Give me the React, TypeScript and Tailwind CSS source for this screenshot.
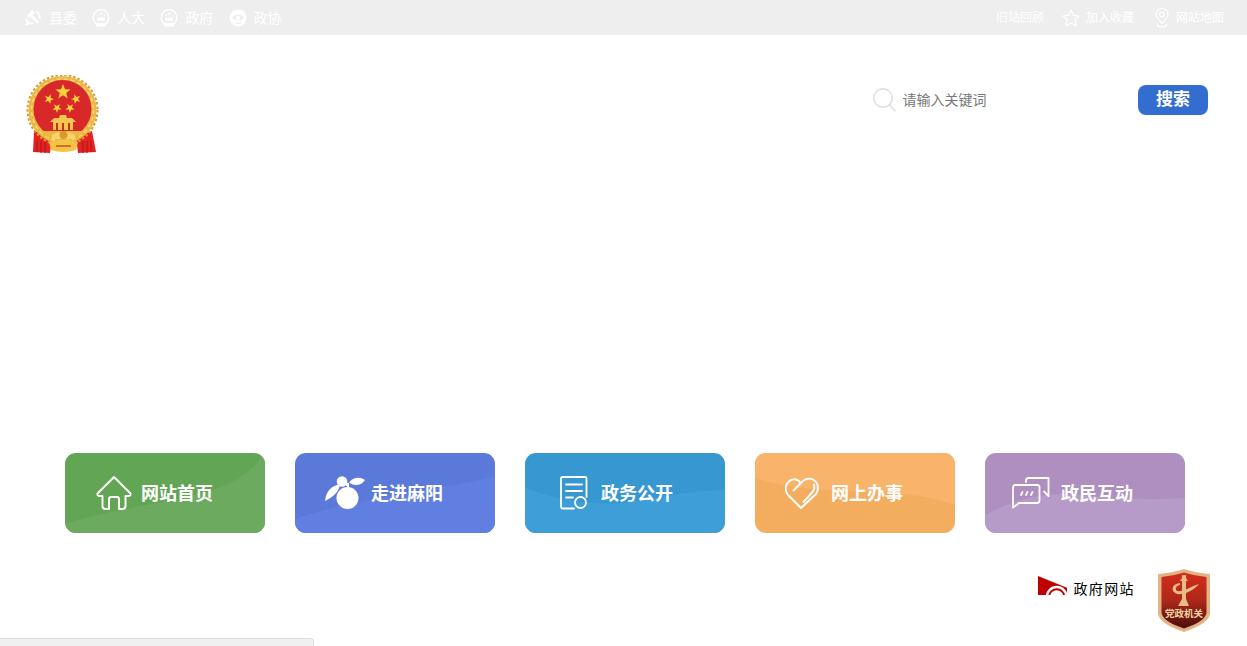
import React from "react";

const FONT = "font-['Liberation_Sans','Noto_Sans_CJK_SC',sans-serif]";

const Star = ({ cx, cy, r, fill = "#f7d23c", rot = 0 }: { cx: number; cy: number; r: number; fill?: string; rot?: number }) => {
  const pts: string[] = [];
  for (let i = 0; i < 10; i++) {
    const a = ((-90 + rot + i * 36) * Math.PI) / 180;
    const rr = i % 2 === 0 ? r : r * 0.42;
    pts.push(`${(cx + rr * Math.cos(a)).toFixed(2)},${(cy + rr * Math.sin(a)).toFixed(2)}`);
  }
  return <polygon points={pts.join(" ")} fill={fill} />;
};

const PartyIcon = () => (
  <svg width="18" height="18" viewBox="0 0 18 18" fill="#fff">
    <path d="M8 1 L11 3.5 L8.5 6 L15 13 L13.5 15 L6.5 7.5 L5 9 L3 6.5 Z" />
    <path d="M11.5 1.5 C15.5 3 17.5 7 16.5 11 L14.5 9 C15 6.5 14 4 11.5 2.5 Z" />
    <path d="M2.5 8.5 C2.5 12 6 14 9 13.5 L10.5 15 L8.5 15.5 L5.5 15 L2.5 17 L1 15.5 L3 14 C1.5 12.5 1 10.5 1.5 9 Z" />
  </svg>
);

const EmblemIcon = () => (
  <svg width="18" height="18" viewBox="0 0 18 18">
    <circle cx="9" cy="8.5" r="7.8" fill="none" stroke="#fff" strokeWidth="1.3" />
    <Star cx={9} cy={4.6} r={1.8} fill="#fff" />
    <Star cx={5.6} cy={6.6} r={1} fill="#fff" />
    <Star cx={12.4} cy={6.6} r={1} fill="#fff" />
    <rect x="5" y="8.6" width="8" height="3" fill="#fff" />
    <path d="M3 14 H15 L13.5 17.5 H4.5 Z" fill="#fff" />
  </svg>
);

const CppccIcon = () => (
  <svg width="18" height="18" viewBox="0 0 18 18">
    <circle cx="9" cy="9" r="8.5" fill="#fff" />
    <ellipse cx="9" cy="8.5" rx="5.5" ry="3" fill="#eee" />
    <circle cx="9" cy="9" r="2.2" fill="#fff" />
    <path d="M3 13 Q9 17 15 13 Q9 14.5 3 13 Z" fill="#eee" />
  </svg>
);

const TopLink = ({ icon, label }: { icon: React.ReactNode; label: string }) => (
  <div className="flex items-center">
    {icon}
    <span className="ml-[7px] text-[14px] text-white leading-none">{label}</span>
  </div>
);

const NationalEmblem = () => (
  <svg width="74" height="79" viewBox="0 0 74 79">
    {/* ribbons go behind the wreath */}
    <path d="M8 56 L7 77 L24 78 L26 62 Z" fill="#e32322" />
    <path d="M66 56 L70 77 L52 78 L50 62 Z" fill="#e32322" />
    <path d="M11 66 V77 M15 66 V78 M19 66 V78 M57 66 V78 M61 66 V78 M65 66 V77" stroke="#a91717" strokeWidth="1" />
    <circle cx="36.5" cy="35" r="34" fill="#ecb642" />
    <circle cx="36.5" cy="35" r="35" fill="none" stroke="#dc9a2c" strokeWidth="2" strokeDasharray="2.5 2" />
    <circle cx="36.5" cy="35" r="31" fill="none" stroke="#f8dd86" strokeWidth="1.5" strokeDasharray="4 3" />
    <circle cx="36.5" cy="34" r="29" fill="#d8282a" />
    <Star cx={37} cy={17} r={8} />
    <Star cx={23} cy={24} r={5} rot={20} />
    <Star cx={50} cy={24} r={5} rot={-20} />
    <Star cx={31} cy={33} r={4.8} rot={35} />
    <Star cx={44} cy={33} r={4.8} rot={-35} />
    <path d="M34 40 H40 L41 43 H46 L50 47 H47 V55 H27 V47 H24 L28 43 H33 Z" fill="#f4c84c" />
    <rect x="30" y="48" width="2" height="7" fill="#c93021" />
    <rect x="36" y="48" width="2" height="7" fill="#c93021" />
    <rect x="42" y="48" width="2" height="7" fill="#c93021" />
    <path d="M14 56 H59 L52 62 H21 Z" fill="#efb93f" />
    <path d="M26 60 Q37 53 49 60 V64 H26 Z" fill="#f6d568" />
    <circle cx="37.5" cy="60" r="4" fill="#d89a2c" />
    <path d="M23 67 Q37 63 52 67 L50 75 Q37 79 25 75 Z" fill="#f2c345" />
    <path d="M30 71 H45" stroke="#c9541c" strokeWidth="1.5" />
  </svg>
);

const Wave = ({ d, fill }: { d: string; fill: string }) => (
  <svg className="absolute inset-0" width="200" height="80" viewBox="0 0 200 80">
    <path d={d} fill={fill} />
  </svg>
);

const HomeIcon = () => (
  <svg width="36" height="34" viewBox="0 0 36 34" fill="none" stroke="#fff" strokeWidth="1.9" strokeLinejoin="round" strokeLinecap="round">
    <path d="M18 1 L34.5 17.5 Q35 19.5 33 20 H29.5 V30 Q29.5 33 26.5 33 H23 V23 Q23 21 21 21 H15 Q13 21 13 23 V33 H9.5 Q6.5 33 6.5 30 V20 H3 Q1 19.5 1.5 17.5 Z" />
  </svg>
);

const FruitIcon = () => (
  <svg width="42" height="34" viewBox="0 0 42 34" fill="#fff">
    <circle cx="23.5" cy="22" r="11" />
    <circle cx="18" cy="5.5" r="5.3" />
    <path d="M25 6.5 C29 1 36 0.5 41 4 C38 9 31 11 25 6.5 Z" />
    <path d="M1 25 C2 15 8 9 16 8.5 C15 16 9 21 1 25 Z" />
    <path d="M20 8 Q22 6 25 7 L25 12 Z" />
  </svg>
);

const DocIcon = () => (
  <svg width="28" height="34" viewBox="0 0 28 34" fill="none" stroke="#fff" strokeWidth="1.8" strokeLinecap="round">
    <path d="M14 32.5 H3 Q1 32.5 1 30.5 V2.5 Q1 1 2.5 1 H25 Q26.5 1 26.5 2.5 V21" />
    <path d="M6 8.5 H22 M6 15 H22 M6 21.5 H13" />
    <circle cx="20.5" cy="26.5" r="5.5" />
  </svg>
);

const HeartIcon = () => (
  <svg width="36" height="34" viewBox="0 0 36 34" fill="none" stroke="#fff" strokeWidth="1.9" strokeLinecap="round" strokeLinejoin="round">
    <path d="M16 32 L3 19 C-0.5 15 0 8 5 4.5 C9 2 13 3.5 16 7 L8.5 14.5" />
    <path d="M16 7 C19 3 24 1.5 28 3.5 C33 6 34.5 13 31 18 L16 32" />
    <path d="M18.5 26 L27.5 16 Q30 13 29 8.5" />
  </svg>
);

const ChatIcon = () => (
  <svg width="38" height="32" viewBox="0 0 38 32" fill="none" stroke="#fff" strokeWidth="1.8" strokeLinecap="round" strokeLinejoin="round">
    <path d="M14 5 V3.5 Q14 1 16.5 1 H36.5 V19 L32 14.5" />
    <path d="M26 8 H3.5 Q1 8 1 10.5 V30.5 L7 26 H25 Q27.5 26 27.5 23.5 V9.5 Z" />
    <path d="M9 18 L10.5 15 M14 18 L15.5 15 M19 18 L20.5 15" strokeWidth="1.8" />
  </svg>
);

const navCards = [
  { label: "网站首页", icon: <HomeIcon />, bg: "bg-[#62a555]", wave: "M0 71 C60 52 130 48 165 30 C180 22 192 12 200 0 V80 H0 Z", fill: "#6caa60", iconBox: "ml-[31px] w-[36px]", gap: "ml-[9px]" },
  { label: "走进麻阳", icon: <FruitIcon />, bg: "bg-[#5b79d9]", wave: "M0 66 C50 48 130 38 200 24 V80 H0 Z", fill: "#617fe0", iconBox: "ml-[29px] w-[42px]", gap: "ml-[5px]" },
  { label: "政务公开", icon: <DocIcon />, bg: "bg-[#3797d0]", wave: "M0 35 C30 46 60 52 95 50 C130 46 165 37 200 37 V80 H0 Z", fill: "#3e9fd8", iconBox: "ml-[35px] w-[28px]", gap: "ml-[13px]" },
  { label: "网上办事", icon: <HeartIcon />, bg: "bg-[#f3ad5f]", wave: "M0 25 C50 42 120 36 165 43 C180 46 192 49 200 52 V0 H0 Z", fill: "#f8b46b", iconBox: "ml-[30px] w-[36px]", gap: "ml-[10px]" },
  { label: "政民互动", icon: <ChatIcon />, bg: "bg-[#ae8fc0]", wave: "M0 62 C30 46 60 38 100 42 C135 46 170 47 200 45 V80 H0 Z", fill: "#b69bc9", iconBox: "ml-[27px] w-[38px]", gap: "ml-[11px]" },
];

const GovSiteLogo = () => (
  <svg width="30" height="19" viewBox="0 0 30 19">
    <path d="M0 0 L29 11.7 V19 H0 Z" fill="#c00000" />
    <circle cx="18.7" cy="20.7" r="11" fill="#fff" />
    <circle cx="18.7" cy="20.7" r="8.5" fill="#c00000" />
    <circle cx="18.7" cy="20.7" r="6.5" fill="#fff" />
  </svg>
);

const PartyBadge = () => (
  <svg width="52" height="63" viewBox="0 0 52 63">
    <defs>
      <linearGradient id="shield" x1="0" y1="0" x2="0" y2="1">
        <stop offset="0%" stopColor="#d52c1a" />
        <stop offset="50%" stopColor="#ad281a" />
        <stop offset="75%" stopColor="#7c1a11" />
        <stop offset="100%" stopColor="#4a0f0a" />
      </linearGradient>
    </defs>
    <path d="M0 5 Q14 4 26 0 Q38 4 52 5 V44 Q52 54 26 63 Q0 54 0 44 Z" fill="#e2b384" />
    <path d="M3.5 8 Q15 7 26 3.5 Q37 7 48.5 8 V43 Q48.5 52 26 59.5 Q3.5 52 3.5 43 Z" fill="url(#shield)" />
    <path d="M24 6 H28 V9 L30 12 H28 V30 L31 37 H20 L24 30 V12 H22 L24 9 Z" fill="#e9bb85" />
    <path d="M15 22 Q13 15 22 14 L22 16 Q17 17 18 21 Q20 24 29 20 Q37 16 41 15 Q36 21 28 24 Q18 27 15 22 Z" fill="#e9bb85" />
    <text x="26" y="47.5" textAnchor="middle" fontSize="9.5" fontWeight="700" fill="#f3d6a8" fontFamily="'Noto Sans CJK SC',sans-serif">党政机关</text>
  </svg>
);

export default function App() {
  return (
    <div className={`relative h-[646px] w-full overflow-hidden bg-white ${FONT}`}>
      <div className="flex h-[35px] items-center justify-between bg-[#eeeeee] pl-[24px] pr-[23px]">
        <div className="flex items-center gap-[15.2px]">
          <TopLink icon={<PartyIcon />} label="县委" />
          <TopLink icon={<EmblemIcon />} label="人大" />
          <TopLink icon={<EmblemIcon />} label="政府" />
          <TopLink icon={<CppccIcon />} label="政协" />
        </div>
        <div className="flex items-center text-[12px] text-white">
          <span>旧站回顾</span>
          <svg className="ml-[18px]" width="18" height="18" viewBox="0 0 18 18" fill="none" stroke="#fff" strokeWidth="1.2" strokeLinejoin="round">
            <path d="M9 1 L11.4 6.3 L17 7 L12.9 11 L14 16.8 L9 14 L4 16.8 L5.1 11 L1 7 L6.6 6.3 Z" />
          </svg>
          <span className="ml-[6px]">加入收藏</span>
          <svg className="ml-[21px]" width="14" height="20" viewBox="0 0 14 20" fill="none" stroke="#fff" strokeWidth="1.2">
            <path d="M7 15.5 C3.5 11.5 1 9 1 6.5 A6 6 0 0 1 13 6.5 C13 9 10.5 11.5 7 15.5 Z" />
            <circle cx="7" cy="6.5" r="2.4" />
            <path d="M3 15.5 Q1 18.8 7 19 Q13 18.8 11 15.5" />
          </svg>
          <span className="ml-[7px]">网站地图</span>
        </div>
      </div>

      <div className="flex h-[418px] items-start justify-between pl-[26px] pr-[39px] pt-[40px]">
        <NationalEmblem />
        <div className="mt-[10px] flex w-[335px] items-center">
          <svg width="23" height="24" viewBox="0 0 23 24" fill="none" stroke="#dddddd" strokeWidth="1.4" strokeLinecap="round">
            <circle cx="10" cy="10" r="9.3" />
            <path d="M16.8 17 L22 23" />
          </svg>
          <span className="ml-[6.5px] text-[14px] text-[#777777]">请输入关键词</span>
          <button className="ml-auto h-[30px] w-[70px] rounded-[8px] bg-[#346dd0] text-[17px] font-bold text-white">搜索</button>
        </div>
      </div>

      <div className="flex gap-[30px] pl-[65px]">
        {navCards.map((card) => (
          <div key={card.label} className={`relative flex h-[80px] w-[200px] items-center overflow-hidden rounded-[11px] ${card.bg}`}>
            <Wave d={card.wave} fill={card.fill} />
            <div className={`relative flex shrink-0 justify-center ${card.iconBox}`}>{card.icon}</div>
            <span className={`relative mt-[3px] text-[18px] font-bold text-white ${card.gap}`}>{card.label}</span>
          </div>
        ))}
      </div>

      <div className="mt-[36px] flex items-start justify-end pr-[37px]">
        <div className="mt-[7px] flex items-start">
          <GovSiteLogo />
          <span className="ml-[5.5px] mt-[3.5px] text-[14px] leading-[19px] tracking-[1.4px] text-black">政府网站</span>
        </div>
        <div className="ml-[23px]">
          <PartyBadge />
        </div>
      </div>

      <div className="absolute bottom-0 left-0 h-[8px] w-[314px] rounded-tr-[4px] border-r border-t border-[#dddddd] bg-[#f0f0f0]" />
    </div>
  );
}
